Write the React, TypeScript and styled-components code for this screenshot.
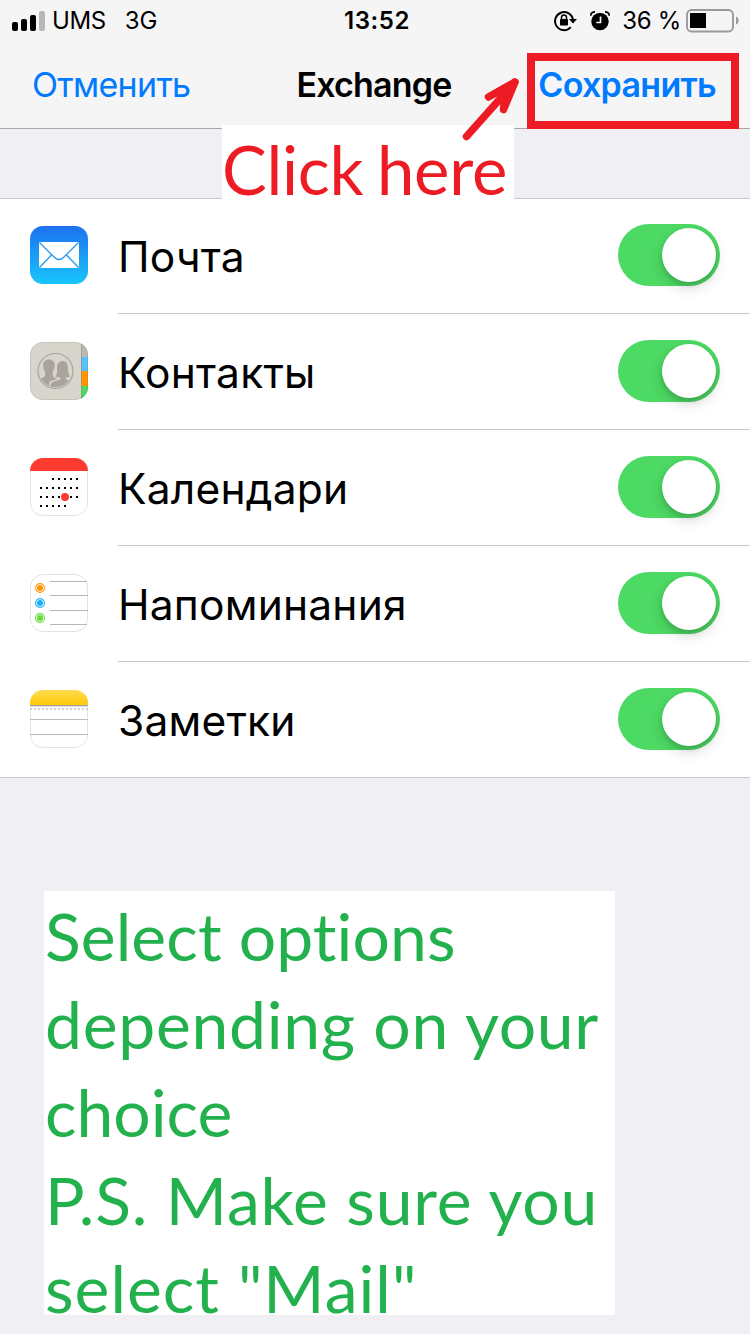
import React from 'react';
import styled, { createGlobalStyle } from 'styled-components';

const GlobalStyle = createGlobalStyle`
  * { box-sizing: border-box; }
  body { margin: 0; background: #efeff4; font-family: Inter, 'Liberation Sans', sans-serif; color: #000; }
`;

const Screen = styled.div`
  width: 750px;
  height: 1334px;
  overflow: hidden;
  background: #efeff4;
`;

const Header = styled.header`
  height: 129px;
  background: #f5f5f6;
  border-bottom: 1px solid #a7a7ab;
`;

const StatusBar = styled.div`
  display: grid;
  grid-template-columns: 1fr auto 1fr;
  align-items: center;
  height: 40px;
  padding: 0 11px 0 12px;
  font-size: 24px;
  line-height: 40px;
`;

const StatusSide = styled.div<{ $end?: boolean }>`
  display: flex;
  align-items: center;
  justify-content: ${p => (p.$end ? 'flex-end' : 'flex-start')};
`;

const StatusText = styled.span<{ $left?: number; $spacing?: number; $bold?: boolean }>`
  margin-left: ${p => p.$left ?? 0}px;
  padding-top: 1px;
  letter-spacing: ${p => p.$spacing ?? 0}px;
  font-weight: ${p => (p.$bold ? 600 : 400)};
  white-space: nowrap;
`;

const Glyph = styled.svg<{ $right?: number }>`
  display: block;
  flex: none;
  margin-right: ${p => p.$right ?? 0}px;
`;

const NavBar = styled.nav`
  display: grid;
  grid-template-columns: 1fr auto 1fr;
  align-items: center;
  height: 88px;
  padding: 1px 34px 0 32px;
`;

const NavItem = styled.span<{ $tone?: string; $strong?: boolean; $end?: boolean; $spacing?: number }>`
  color: ${p => p.$tone ?? '#000'};
  font-size: 34px;
  font-weight: ${p => (p.$strong ? 600 : 400)};
  letter-spacing: ${p => p.$spacing ?? 0}px;
  justify-self: ${p => (p.$end ? 'end' : 'start')};
  white-space: nowrap;
`;

const List = styled.ul`
  list-style: none;
  margin: 69px 0 0;
  padding: 0;
  background: #fff;
  border-top: 1px solid #c8c7cc;
  border-bottom: 1px solid #c8c7cc;
`;

const Row = styled.li`
  display: flex;
  height: 116px;
  padding-left: 30px;
  &:first-child { height: 115px; }
  &:last-child { height: 115px; }
`;

const AppIcon = styled.svg`
  display: block;
  flex: none;
  margin: 28px 30px 0 0;
  ${Row}:first-child & { margin-top: 27px; }
`;

const RowBody = styled.div`
  flex: 1;
  display: flex;
  justify-content: space-between;
  padding-right: 30px;
  border-bottom: 1px solid #c8c7cc;
  ${Row}:last-child & { border-bottom: 0; }
`;

const Label = styled.span`
  font-size: 42.5px;
  line-height: 117px;
  letter-spacing: 0.2px;
  ${Row}:first-child & { line-height: 115px; }
`;

const Toggle = styled.span`
  display: flex;
  justify-content: flex-end;
  width: 102px;
  height: 62px;
  margin-top: 26px;
  padding: 4px;
  border-radius: 31px;
  background: #4cd964;
  ${Row}:first-child & { margin-top: 25px; }
`;

const Knob = styled.span`
  width: 54px;
  height: 54px;
  border-radius: 50%;
  background: #fff;
  box-shadow: 0 6px 14px rgba(0, 0, 0, 0.15), 0 3px 5px rgba(0, 0, 0, 0.12);
`;

const NoteLine = styled.div<{ $spacing: number }>`
  height: 88px;
  letter-spacing: ${p => p.$spacing}px;
  white-space: pre;
`;

const Note = styled.section`
  width: 571px;
  height: 424px;
  margin: 113px 0 0 44px;
  padding-left: 1px;
  background: #fff;
  color: #22b14c;
  font: 400 66px/90px Lato, Inter, sans-serif;
  font-variant-ligatures: none;
`;

const Callout = styled.div`
  position: absolute;
  left: 222px;
  top: 125px;
  width: 292px;
  height: 74px;
  background: #fff;
  color: #ed1c24;
  font: 400 67px/89px Lato, Inter, sans-serif;
  white-space: nowrap;
  letter-spacing: -0.3px;
  word-spacing: -3px;
`;

const Highlight = styled.div`
  position: absolute;
  left: 527px;
  top: 53px;
  width: 212px;
  height: 76px;
  border: 8px solid #ed1c24;
`;

const Arrow = styled.svg`
  position: absolute;
  left: 450px;
  top: 60px;
`;

function MailArt() {
  return (
    <>
      <defs>
        <linearGradient id="mail" x1="0" y1="0" x2="0" y2="1">
          <stop offset="0" stopColor="#1d71f0" />
          <stop offset="1" stopColor="#19c5fb" />
        </linearGradient>
      </defs>
      <rect width="58" height="58" rx="13" fill="url(#mail)" />
      <rect x="9" y="16" width="40" height="26" rx="1" fill="#fff" />
      <path d="M9.500 16.500L24 31Q29 36 34 31L48.500 16.500M9.500 41.500L21.500 29M48.500 41.500L36.500 29" fill="none" stroke="#2d9bf2" strokeWidth="1.400" />
    </>
  );
}

function ContactsArt() {
  return (
    <>
      <clipPath id="book"><rect width="58" height="58" rx="13" /></clipPath>
      <g clipPath="url(#book)">
        <rect width="58" height="58" fill="#d8d5cd" />
        <rect x="51" width="7" height="15" fill="#bdb8b0" />
        <rect x="51" y="15" width="7" height="14" fill="#5ac2fb" />
        <rect x="51" y="29" width="7" height="15" fill="#ff9500" />
        <rect x="51" y="44" width="7" height="14" fill="#4cd964" />
        <path d="M51.500 0V58" stroke="#8e8b80" strokeOpacity="0.600" />
      </g>
      <clipPath id="ring"><circle cx="25.500" cy="29" r="16.300" /></clipPath>
      <circle cx="25.500" cy="29" r="17.500" fill="none" stroke="#aaa39c" strokeWidth="1.200" />
      <g clipPath="url(#ring)" fill="#aaa39c">
        <path d="M19 17.500C23 17.500 25 20 24.700 24C24.500 27 23.500 28 22.800 29.500V34C24 36 27 36 28 38L20 39C19 43 19 46 19 48H5V38C8 36 14 36.500 15 34V29.500C13.800 28 13 26 13.200 23C13.300 19.500 15.500 17.500 19 17.500Z" />
        <path d="M32.500 19C37 19 38 23 38 27C38 31 39 33 40 34.500C38 35.500 36.500 35.500 35.500 35.500V37C39 39 43 38 45 42V50H19C19 43 21 40 25 39C28 38 29.500 38 30 37V35.500C28 35.500 27 35.500 25.500 34.500C27 32 27 30 27 27C27 22 28.500 19 32.500 19Z" />
        <path d="M19 47C19 42 21 39.500 24 38.500C27 37.500 30 38 30 35.500" fill="none" stroke="#d8d5cd" strokeWidth="1.300" />
      </g>
      <rect x="0.500" y="0.500" width="57" height="57" rx="12.500" fill="none" stroke="#000" strokeOpacity="0.080" />
    </>
  );
}

const calendarDays = [
  [2, 3, 4, 5, 6],
  [0, 1, 2, 3, 4, 5, 6],
  [0, 1, 2, 3, 4, 5, 6],
  [0, 1, 2, 3, 4],
];

function CalendarArt() {
  return (
    <>
      <clipPath id="cal"><rect width="58" height="58" rx="13" /></clipPath>
      <rect x="0.500" y="0.500" width="57" height="57" rx="12.500" fill="#fff" stroke="#e2e2e2" />
      <rect width="58" height="13" fill="#ff3b30" clipPath="url(#cal)" />
      {calendarDays.map((cols, r) => cols.map(c => (
        <rect key={`${r}-${c}`} x={10 + c * 6} y={20 + r * 9} width="2" height="2" />
      )))}
      <circle cx="35" cy="39" r="4" fill="#ff3b30" />
    </>
  );
}

function RemindersArt() {
  return (
    <>
      <rect x="0.500" y="0.500" width="57" height="57" rx="12.500" fill="#fff" stroke="#e2e2e2" />
      {[7, 21, 36, 50].map(y => <rect key={y} x="20" y={y} width={y === 7 || y === 50 ? 37 : 38} height="1" fill="#b5b5ba" />)}
      {['#ff9500', '#1badf8', '#63da38'].map((c, i) => (
        <g key={c}>
          <circle cx="10" cy={14 + i * 15} r="4.400" fill="none" stroke={c} strokeWidth="1.100" />
          <circle cx="10" cy={14 + i * 15} r="3" fill={c} />
        </g>
      ))}
    </>
  );
}

function NotesArt() {
  return (
    <>
      <defs>
        <linearGradient id="pad" x1="0" y1="0" x2="0" y2="1">
          <stop offset="0" stopColor="#fedb50" />
          <stop offset="1" stopColor="#fecb08" />
        </linearGradient>
        <clipPath id="notes"><rect width="58" height="58" rx="13" /></clipPath>
      </defs>
      <rect x="0.500" y="0.500" width="57" height="57" rx="12.500" fill="#fff" stroke="#e2e2e2" />
      <g clipPath="url(#notes)">
        <rect width="58" height="15" fill="url(#pad)" />
        <rect y="15" width="58" height="1" fill="#a9a59b" />
        <rect y="16" width="58" height="1" fill="#dedede" />
        <path d="M0 19H58" stroke="#cfcfcf" strokeWidth="2" strokeDasharray="2 2" />
        <rect y="29" width="58" height="1" fill="#bcbcbe" />
        <rect y="44" width="58" height="1" fill="#bcbcbe" />
      </g>
    </>
  );
}

const items = [
  { label: 'Почта', Art: MailArt },
  { label: 'Контакты', Art: ContactsArt },
  { label: 'Календари', Art: CalendarArt },
  { label: 'Напоминания', Art: RemindersArt },
  { label: 'Заметки', Art: NotesArt },
];

const note = [
  { text: 'Select options', spacing: 0.1 },
  { text: 'depending on your', spacing: 0.7 },
  { text: 'choice', spacing: 0 },
  { text: 'P.S. Make sure you', spacing: 0.8 },
  { text: 'select "Mail"', spacing: 1 },
];

export default function App() {
  return (
    <Screen>
      <GlobalStyle />
      <Header>
        <StatusBar>
          <StatusSide>
            <Glyph width="34" height="20" viewBox="0 0 34 20">
              <rect x="0" y="11" width="6" height="9" rx="2" />
              <rect x="9" y="8" width="6" height="12" rx="2" />
              <rect x="18" y="4" width="6" height="16" rx="2" />
              <rect x="27" y="0" width="6" height="20" rx="2" fill="#b8b8b9" />
            </Glyph>
            <StatusText $left={6} $spacing={-0.4}>UMS</StatusText>
            <StatusText $left={19}>3G</StatusText>
          </StatusSide>
          <StatusText $bold $left={3} $spacing={0.6}>13:52</StatusText>
          <StatusSide $end>
            <Glyph $right={12} width="24" height="22" viewBox="0 0 24 22">
              <path d="M16.800 17.100A9 9 0 1 1 19 10" fill="none" stroke="#000" strokeWidth="2" />
              <path d="M15 9H23L19 13.500Z" />
              <rect x="6" y="9" width="8" height="6.500" rx="0.800" />
              <path d="M7.500 9.500V7.500A2.500 2.500 0 0 1 12.500 7.500V9.500" fill="none" stroke="#000" strokeWidth="1.500" />
            </Glyph>
            <Glyph $right={12} width="20" height="20" viewBox="0 0 20 20">
              <circle cx="10" cy="10.500" r="8.700" />
              <path d="M0.700 4.700Q1 1 5 0.900M19.300 4.700Q19 1 15 0.900" fill="none" stroke="#000" strokeWidth="1.700" />
              <path d="M10.500 5.500V11.500H6.300" fill="none" stroke="#f5f5f6" strokeWidth="1.700" />
            </Glyph>
            <StatusText $spacing={-0.3}>36 %</StatusText>
            <Glyph width="58" height="24" viewBox="-5 0 58 24">
              <rect x="1" y="1" width="46" height="21.500" rx="4.500" fill="none" stroke="#9a9a9a" strokeWidth="1.900" />
              <rect x="4" y="4" width="16" height="15" />
              <path d="M50 7.500C53.500 8.500 53.500 14.500 50 15.500Z" fill="#9a9a9a" />
            </Glyph>
          </StatusSide>
        </StatusBar>
        <NavBar>
          <NavItem $tone="#007aff" $spacing={-0.7}>Отменить</NavItem>
          <NavItem $strong $spacing={-0.8}>Exchange</NavItem>
          <NavItem $tone="#007aff" $strong $end $spacing={-0.7}>Сохранить</NavItem>
        </NavBar>
      </Header>
      <List>
        {items.map(({ label, Art }) => (
          <Row key={label}>
            <AppIcon width="58" height="58" viewBox="0 0 58 58"><Art /></AppIcon>
            <RowBody>
              <Label>{label}</Label>
              <Toggle><Knob /></Toggle>
            </RowBody>
          </Row>
        ))}
      </List>
      <Note>
        {note.map(line => <NoteLine key={line.text} $spacing={line.spacing}>{line.text}</NoteLine>)}
      </Note>
      <Callout>Click here</Callout>
      <Highlight />
      <Arrow width="75" height="85" viewBox="0 0 75 85">
        <path d="M16.500 76.500L65 22L38.500 37M65 22L53.500 49.500L55 34" fill="none" stroke="#ed1c24" strokeWidth="7.500" strokeLinecap="round" strokeLinejoin="round" />
      </Arrow>
    </Screen>
  );
}
